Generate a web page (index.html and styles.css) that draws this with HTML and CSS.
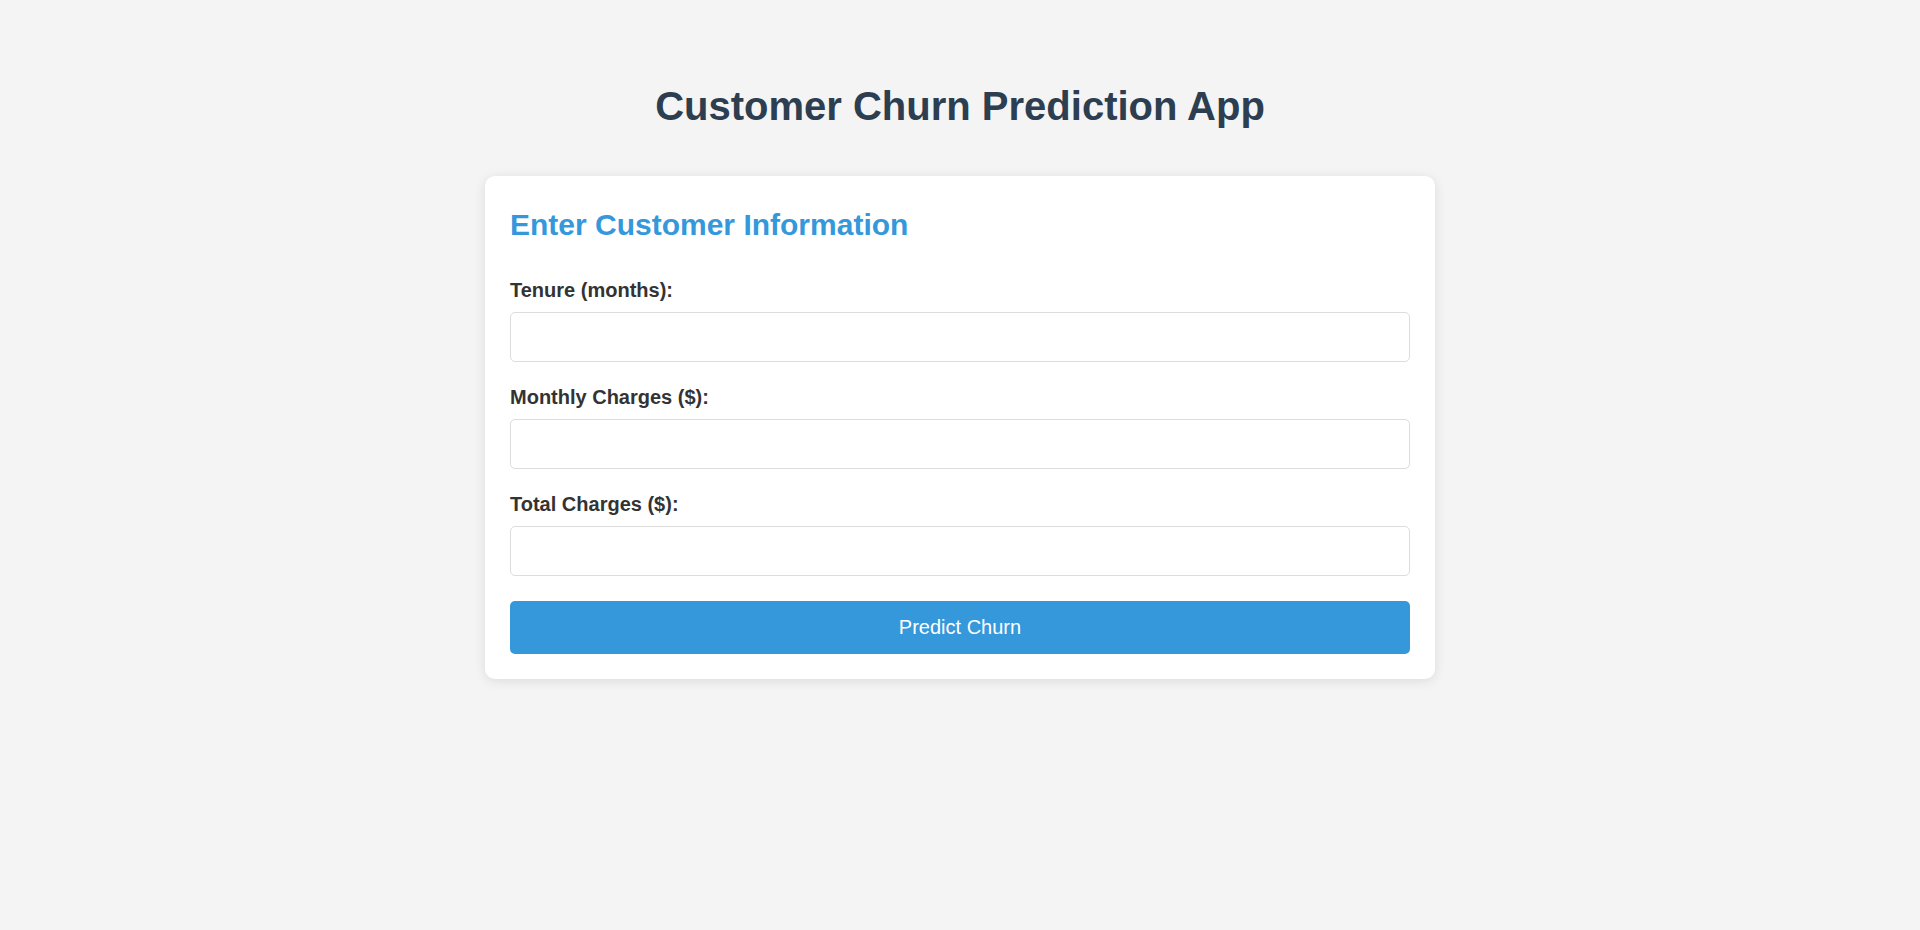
FILE: index.html
```html
<!DOCTYPE html>
<html lang="en">
<head>
<meta charset="utf-8">
<title>Customer Churn Prediction App</title>
<link rel="stylesheet" href="styles.css">
</head>
<body>
  <h1 class="page-title">Customer Churn Prediction App</h1>
  <div class="card">
    <h2 class="card-title">Enter Customer Information</h2>
    <form class="form" onsubmit="return false;">
      <div class="field">
        <label class="field-label" for="tenure">Tenure (months):</label>
        <input class="field-input" id="tenure" type="number">
      </div>
      <div class="field">
        <label class="field-label" for="monthly">Monthly Charges ($):</label>
        <input class="field-input" id="monthly" type="number">
      </div>
      <div class="field">
        <label class="field-label" for="total">Total Charges ($):</label>
        <input class="field-input" id="total" type="number">
      </div>
      <button class="submit-btn" type="submit">Predict Churn</button>
    </form>
  </div>
</body>
</html>
```
FILE: styles.css
```css
html, body {
  margin: 0;
  padding: 0;
}

body {
  background: #f4f4f4;
  font-family: "Liberation Sans", Arial, sans-serif;
  padding-top: 83px;
  min-height: 930px;
  box-sizing: border-box;
}

.page-title {
  margin: 0 0 47px;
  font-size: 40px;
  line-height: 46px;
  font-weight: bold;
  color: #2c3e50;
  text-align: center;
}

.card {
  width: 950px;
  box-sizing: border-box;
  margin: 0 auto;
  padding: 25px;
  background: #ffffff;
  border-radius: 10px;
  box-shadow: 0 2px 12px rgba(0, 0, 0, 0.1);
}

.card-title {
  margin: 6px 0 36px;
  font-size: 30px;
  line-height: 35px;
  font-weight: bold;
  color: #3498db;
}

.form {
  display: flex;
  flex-direction: column;
  gap: 23px;
}

.field {
  display: flex;
  flex-direction: column;
}

.field-label {
  display: block;
  padding-top: 1px;
  margin-bottom: 10px;
  font-size: 20px;
  line-height: 23px;
  font-weight: bold;
  color: #333333;
}

.field-input {
  display: block;
  width: 100%;
  height: 50px;
  box-sizing: border-box;
  margin: 0;
  padding: 0 12px;
  border: 1px solid #dddddd;
  border-radius: 5px;
  background: #ffffff;
  font-family: inherit;
  font-size: 20px;
  outline: none;
}

.submit-btn {
  display: block;
  width: 100%;
  height: 53px;
  margin-top: 2px;
  border: none;
  border-radius: 5px;
  background: #3498db;
  color: #ffffff;
  font-family: inherit;
  font-size: 20px;
  cursor: pointer;
}
```
